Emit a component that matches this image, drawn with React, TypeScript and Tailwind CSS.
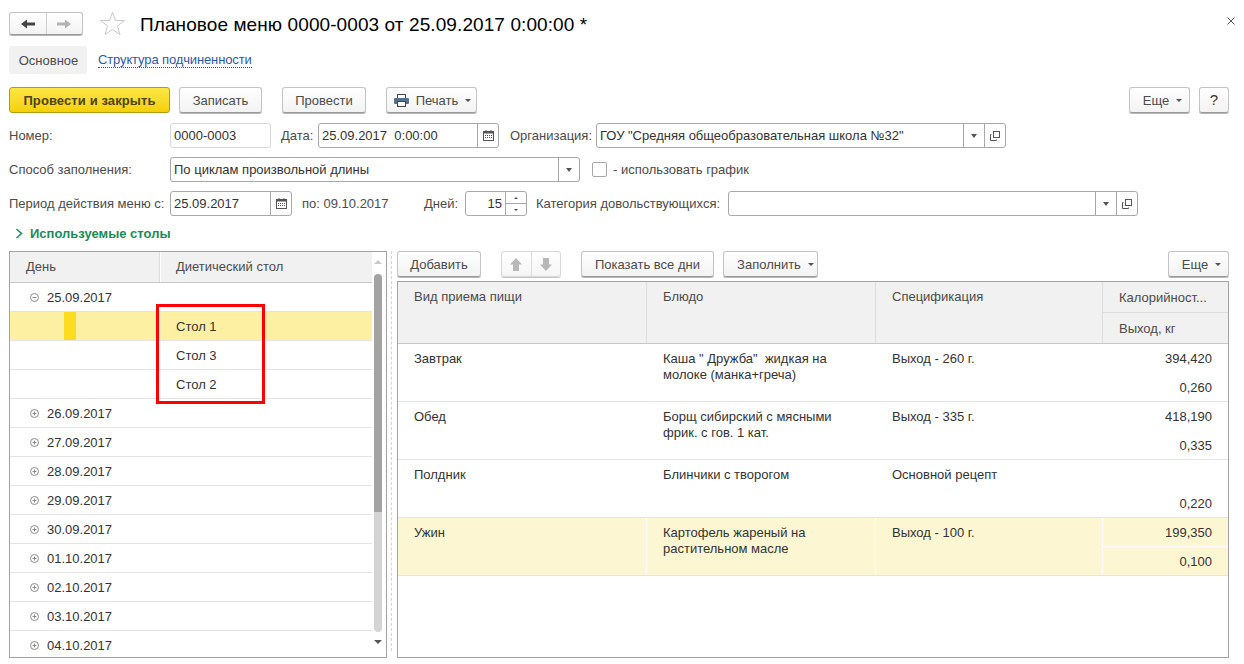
import {ReactNode} from 'react'

const dates = ['26.09.2017', '27.09.2017', '28.09.2017', '29.09.2017', '30.09.2017', '01.10.2017', '02.10.2017', '03.10.2017', '04.10.2017']

const meals = [
	{meal: 'Завтрак', dish: ['Каша " Дружба"  жидкая на', 'молоке (манка+греча)'], spec: 'Выход - 260 г.', cal: '394,420', out: '0,260'},
	{meal: 'Обед', dish: ['Борщ сибирский с мясными', 'фрик. с гов. 1 кат.'], spec: 'Выход - 335 г.', cal: '418,190', out: '0,335'},
	{meal: 'Полдник', dish: ['Блинчики с творогом'], spec: 'Основной рецепт', cal: '', out: '0,220'},
	{meal: 'Ужин', dish: ['Картофель жареный на', 'растительном масле'], spec: 'Выход - 100 г.', cal: '199,350', out: '0,100', active: true}
]

function Caret() {
	return <span className="ml-[7px] inline-block h-0 w-0 border-x-[3px] border-t-[3px] border-x-transparent border-t-[#555]" />
}

function Btn({children, className = ''}: {children: ReactNode; className?: string}) {
	return (
		<div className={`flex h-[26px] shrink-0 items-center justify-center rounded-[3px] border border-[#c4c4c4] border-b-[#9a9a9a] bg-gradient-to-b from-white to-[#f3f3f3] pt-[1px] text-[#4b4b4b] shadow-[0_1px_0_#b5b5b5] ${className}`}>
			{children}
		</div>
	)
}

function Field({value, className = '', children}: {value: string; className?: string; children?: ReactNode}) {
	return (
		<div className={`flex h-[25px] shrink-0 items-stretch rounded-[3px] border border-[#a8a8a8] bg-white ${className}`}>
			<div className="flex-1 overflow-hidden whitespace-pre pl-[3px] leading-[23px] text-[#333]">{value}</div>
			{children}
		</div>
	)
}

function Side({children}: {children: ReactNode}) {
	return <div className="flex w-[21px] shrink-0 items-center justify-center border-l border-[#a8a8a8]">{children}</div>
}

function Drop() {
	return <span className="inline-block h-0 w-0 border-x-[3px] border-t-[4px] border-x-transparent border-t-[#555]" />
}

function CalendarIcon() {
	return (
		<svg width="11" height="11" viewBox="0 0 11 11" fill="none">
			<rect x="0.5" y="1.5" width="10" height="9" fill="#fff" stroke="#555" />
			<rect x="0.5" y="1.5" width="10" height="2" fill="#555" />
			<path d="M3 0v2M8 0v2" stroke="#555" />
			<path d="M2 5.5h7M2 7.5h7" stroke="#555" strokeDasharray="1 1" />
		</svg>
	)
}

function OpenIcon() {
	return (
		<svg width="10" height="10" viewBox="0 0 10 10" fill="none" stroke="#555">
			<rect x="3.5" y="0.5" width="6" height="6" />
			<path d="M1.5 3.5h-1v6h6v-1" />
		</svg>
	)
}

function TreeIcon({open}: {open?: boolean}) {
	return (
		<svg width="9" height="9" viewBox="0 0 9 9" fill="none" stroke="#8a8a8a" className="shrink-0">
			<circle cx="4.5" cy="4.5" r="4" />
			<path d="M2.5 4.5h4" />
			{!open && <path d="M4.5 2.5v4" />}
		</svg>
	)
}

function NavArrow({right, color}: {right?: boolean; color: string}) {
	return (
		<svg width="14" height="10" viewBox="0 0 14 10" className={right ? 'rotate-180' : ''}>
			<path d="M0 5l6-4.500v3h8v3H6v3z" fill={color} />
		</svg>
	)
}

function MoveArrow({down}: {down?: boolean}) {
	return (
		<svg width="12" height="13" viewBox="0 0 12 13" className={down ? 'rotate-180' : ''}>
			<path d="M6 0l6 6.500H9V13H3V6.500H0z" fill="#b8b8b8" />
		</svg>
	)
}

function TreeRow({date}: {date: string}) {
	return (
		<div className="flex h-[29px] shrink-0 items-center border-b border-[#e4e4e4] pl-[20px] text-[#333]">
			<TreeIcon />
			<span className="ml-[8px] mt-[2px]">{date}</span>
		</div>
	)
}

export default function App() {
	return (
		<div className="relative flex h-[664px] w-[1244px] flex-col overflow-hidden bg-white pl-[9px] pr-[15px] font-['Liberation_Sans',Arial,sans-serif] text-[13px] text-[#4b4b4b]">
			{/* title */}
			<div className="mt-[12px] flex h-[23px] items-center">
				<div className="flex h-[23px] w-[74px] rounded-[3px] border border-[#c4c4c4] border-b-[#9a9a9a] bg-gradient-to-b from-white to-[#f3f3f3] shadow-[0_1px_0_#b5b5b5]">
					<div className="flex flex-1 items-center justify-center border-r border-[#d0d0d0]"><NavArrow color="#444" /></div>
					<div className="flex flex-1 items-center justify-center"><NavArrow right color="#b4b4b4" /></div>
				</div>
				<svg width="26" height="25" viewBox="0 0 26 25" fill="none" stroke="#c9c9c9" className="ml-[17px]">
					<path d="M12.5 1.5l3 8h9l-7 5.5 2.500 8.500-7.500-5-7.500 5 2.500-8.500-7-5.500h9z" />
				</svg>
				<div className="ml-[14px] pt-[1px] text-[19px] leading-[23px] tracking-[0.09px] text-black">Плановое меню 0000-0003 от 25.09.2017 0:00:00 *</div>
				<svg width="8" height="8" viewBox="0 0 8 8" stroke="#555" className="ml-auto mr-[-6px] mt-[-6px]">
					<path d="M.5.5l7 7M7.500.5l-7 7" />
				</svg>
			</div>

			{/* tabs */}
			<div className="mt-[11px] flex h-[28px] items-center">
				<div className="flex h-[28px] w-[78px] items-center justify-center rounded-[3px] bg-[#f1f1f1] pl-[1px] pt-[1px]">Основное</div>
				<span className="ml-[11px] mt-[1px] border-b border-dotted border-[#2a5aa8] leading-[14px] tracking-[-0.13px] text-[#2a5aa8]">Структура подчиненности</span>
			</div>

			{/* command bar */}
			<div className="mt-[13px] flex items-center">
				<div className="flex h-[26px] w-[161px] items-center justify-center rounded-[3px] border border-[#b49b14] bg-gradient-to-b from-[#fde643] to-[#f4d000] pt-[1px] font-bold tracking-[0.1px] text-[#4e4318]">Провести и закрыть</div>
				<Btn className="ml-[9px] w-[83px]">Записать</Btn>
				<Btn className="ml-[20px] w-[84px]">Провести</Btn>
				<Btn className="ml-[20px] w-[91px] pl-[2px]">
					<svg width="15" height="13" viewBox="0 0 15 13" className="mr-[7px]">
						<rect x="3.500" y="0.500" width="8" height="4" fill="#fff" stroke="#445" />
						<rect x="0" y="4" width="15" height="6" rx="1" fill="#56708f" />
						<rect x="3.500" y="7.500" width="8" height="5" fill="#fff" stroke="#445" />
					</svg>
					Печать<Caret />
				</Btn>
				<Btn className="ml-auto w-[61px] pl-[6px]">Еще<Caret /></Btn>
				<Btn className="ml-[9px] w-[30px] text-[15px] text-[#333]">?</Btn>
			</div>

			{/* row 1 */}
			<div className="mt-[10px] flex items-center">
				<div className="w-[161px]">Номер:</div>
				<div className="h-[25px] w-[101px] rounded-[3px] border border-[#d8d8d8] pl-[3px] leading-[23px] text-[#333]">0000-0003</div>
				<div className="ml-[10px] w-[37px]">Дата:</div>
				<Field value="25.09.2017  0:00:00" className="w-[181px]"><Side><CalendarIcon /></Side></Field>
				<div className="ml-[11px] w-[86px]">Организация:</div>
				<Field value={'ГОУ "Средняя общеобразовательная школа №32"'} className="w-[410px]">
					<Side><Drop /></Side>
					<Side><OpenIcon /></Side>
				</Field>
			</div>

			{/* row 2 */}
			<div className="mt-[9px] flex items-center">
				<div className="w-[161px]">Способ заполнения:</div>
				<Field value="По циклам произвольной длины" className="w-[410px]"><Side><Drop /></Side></Field>
				<div className="ml-[12px] h-[15px] w-[15px] rounded-[2px] border border-[#a8a8a8]" />
				<div className="ml-[6px]">- использовать график</div>
			</div>

			{/* row 3 */}
			<div className="mt-[9px] flex items-center">
				<div className="w-[161px] whitespace-nowrap">Период действия меню с:</div>
				<Field value="25.09.2017" className="w-[122px]"><Side><CalendarIcon /></Side></Field>
				<div className="ml-[10px] w-[87px] whitespace-pre">по: 09.10.2017</div>
				<div className="ml-[35px] w-[41px]">Дней:</div>
				<div className="flex h-[25px] w-[62px] rounded-[3px] border border-[#a8a8a8]">
					<div className="flex-1 pr-[3px] text-right leading-[23px] text-[#333]">15</div>
					<div className="flex w-[21px] flex-col border-l border-[#a8a8a8]">
						<div className="flex flex-1 items-center justify-center border-b border-[#a8a8a8]"><span className="h-0 w-0 border-x-[2px] border-b-[2px] border-x-transparent border-b-[#555]" /></div>
						<div className="flex flex-1 items-center justify-center"><span className="h-0 w-0 border-x-[2px] border-t-[2px] border-x-transparent border-t-[#555]" /></div>
					</div>
				</div>
				<div className="ml-[9px] w-[192px] whitespace-nowrap">Категория довольствующихся:</div>
				<Field value="" className="w-[410px]">
					<Side><Drop /></Side>
					<Side><OpenIcon /></Side>
				</Field>
			</div>

			{/* group title */}
			<div className="mt-[10px] flex h-[15px] items-center font-bold text-[#1b8a5a]">
				<svg width="8" height="11" viewBox="0 0 8 11" fill="none" stroke="#1b8a5a" strokeWidth="1.500" className="ml-[6px] mr-[7px]">
					<path d="M1.500 1l5 4.500-5 4.500" />
				</svg>
				Используемые столы
			</div>

			{/* panels */}
			<div className="mt-[10px] flex h-[407px]">
				{/* left tree */}
				<div className="flex h-full w-[378px] flex-col overflow-hidden border border-[#a3a3a3]">
					<div className="flex min-h-0 flex-1">
						<div className="flex w-[362px] shrink-0 flex-col overflow-hidden">
							<div className="flex h-[31px] shrink-0 border-b border-[#c8c8c8] bg-[#f1f1f1] leading-[29px]">
								<div className="w-[150px] border-r border-[#dcdcdc] pl-[16px]">День</div>
								<div className="flex-1 border-l border-white pl-[15px]">Диетический стол</div>
							</div>
							<div className="flex h-[29px] shrink-0 items-center border-b border-[#e4e4e4] pl-[20px] text-[#333]">
								<TreeIcon open />
								<span className="ml-[8px] mt-[2px]">25.09.2017</span>
							</div>
							<div className="flex h-[29px] shrink-0 items-stretch border-b border-[#e4e4e4] text-[#333]">
								<div className="flex w-[151px] border-r border-[#fff8c8] bg-[#fdf0a2] pl-[54px]"><div className="w-[12px] bg-[#fcdc20]" /></div>
								<div className="flex flex-1 items-center bg-[#fdf0a2] pl-[15px] pt-[2px]">Стол 1</div>
							</div>
							<div className="flex h-[29px] shrink-0 items-center border-b border-[#e4e4e4] pl-[166px] pt-[2px] text-[#333]">Стол 3</div>
							<div className="flex h-[29px] shrink-0 items-center border-b border-[#e4e4e4] pl-[166px] pt-[2px] text-[#333]">Стол 2</div>
							{dates.map((d) => <TreeRow key={d} date={d} />)}
						</div>
						{/* scrollbar */}
						<div className="flex flex-1 flex-col items-center pr-[2px] pt-[8px]">
							<span className="h-0 w-0 border-x-[4px] border-b-[4px] border-x-transparent border-b-[#c8c8c8]" />
							<div className="mt-[10px] h-[238px] w-[8px] rounded-t-[4px] bg-[#a3a3a3]" />
							<div className="h-[120px] w-[8px] rounded-b-[4px] bg-[#d4d4d4]" />
							<span className="mt-[8px] h-0 w-0 border-x-[4px] border-t-[4px] border-x-transparent border-t-[#555]" />
						</div>
					</div>
				</div>

				{/* splitter */}
				<div className="mx-[4px] h-[400px] w-0 border-l border-dashed border-[#d4d4d4]" />

				{/* right */}
				<div className="ml-[1px] flex min-w-0 flex-1 flex-col">
					<div className="flex items-center">
						<Btn className="w-[84px]">Добавить</Btn>
						<div className="ml-[20px] flex h-[26px] w-[60px] rounded-[3px] border border-[#d8d8d8] bg-gradient-to-b from-white to-[#f5f5f5] shadow-[0_1px_0_#c8c8c8]">
							<div className="flex flex-1 items-center justify-center border-r border-[#dcdcdc]"><MoveArrow /></div>
							<div className="flex flex-1 items-center justify-center"><MoveArrow down /></div>
						</div>
						<Btn className="ml-[20px] w-[133px]">Показать все дни</Btn>
						<Btn className="ml-[9px] w-[95px] pl-[10px]">Заполнить<Caret /></Btn>
						<Btn className="ml-auto w-[61px] pl-[6px]">Еще<Caret /></Btn>
					</div>

					<div className="mt-[4px] flex min-h-0 flex-1 flex-col overflow-hidden border border-[#a3a3a3]">
						<div className="flex h-[62px] shrink-0 border-b border-[#c8c8c8] bg-[#f1f1f1]">
							<div className="w-[249px] border-r border-[#dcdcdc] pl-[16px] pt-[5px]">Вид приема пищи</div>
							<div className="w-[229px] border-r border-[#dcdcdc] pl-[16px] pt-[5px]">Блюдо</div>
							<div className="w-[227px] border-r border-[#dcdcdc] pl-[16px] pt-[5px]">Спецификация</div>
							<div className="flex flex-1 flex-col">
								<div className="h-[31px] border-b border-[#dcdcdc] pl-[16px] pt-[6px]">Калорийност...</div>
								<div className="flex-1 pl-[16px] pt-[6px]">Выход, кг</div>
							</div>
						</div>
						{meals.map((m) => (
							<div key={m.meal} className={`flex h-[58px] shrink-0 border-b border-[#e4e4e4] text-[#333] ${m.active ? 'bg-[#fdf6d2]' : ''}`}>
								<div className={`w-[249px] pl-[16px] pt-[5px] ${m.active ? 'border-r border-white' : ''}`}>{m.meal}</div>
								<div className={`w-[229px] pl-[16px] pt-[7px] leading-[16px] ${m.active ? 'border-r border-white' : ''}`}>
									{m.dish.map((l) => <div key={l} className="whitespace-pre">{l}</div>)}
								</div>
								<div className={`w-[227px] pl-[16px] pt-[5px] ${m.active ? 'border-r border-white' : ''}`}>{m.spec}</div>
								<div className="flex flex-1 flex-col text-right">
									<div className={`flex-1 pr-[16px] pt-[5px] ${m.active ? 'border-b border-white' : ''}`}>{m.cal}</div>
									<div className="flex-1 pr-[16px] pt-[5px]">{m.out}</div>
								</div>
							</div>
						))}
					</div>
				</div>
			</div>

			{/* red selection frame */}
			<div className="absolute left-[156px] top-[304px] h-[100px] w-[109px] border-[3px] border-[#f00]" />
		</div>
	)
}
